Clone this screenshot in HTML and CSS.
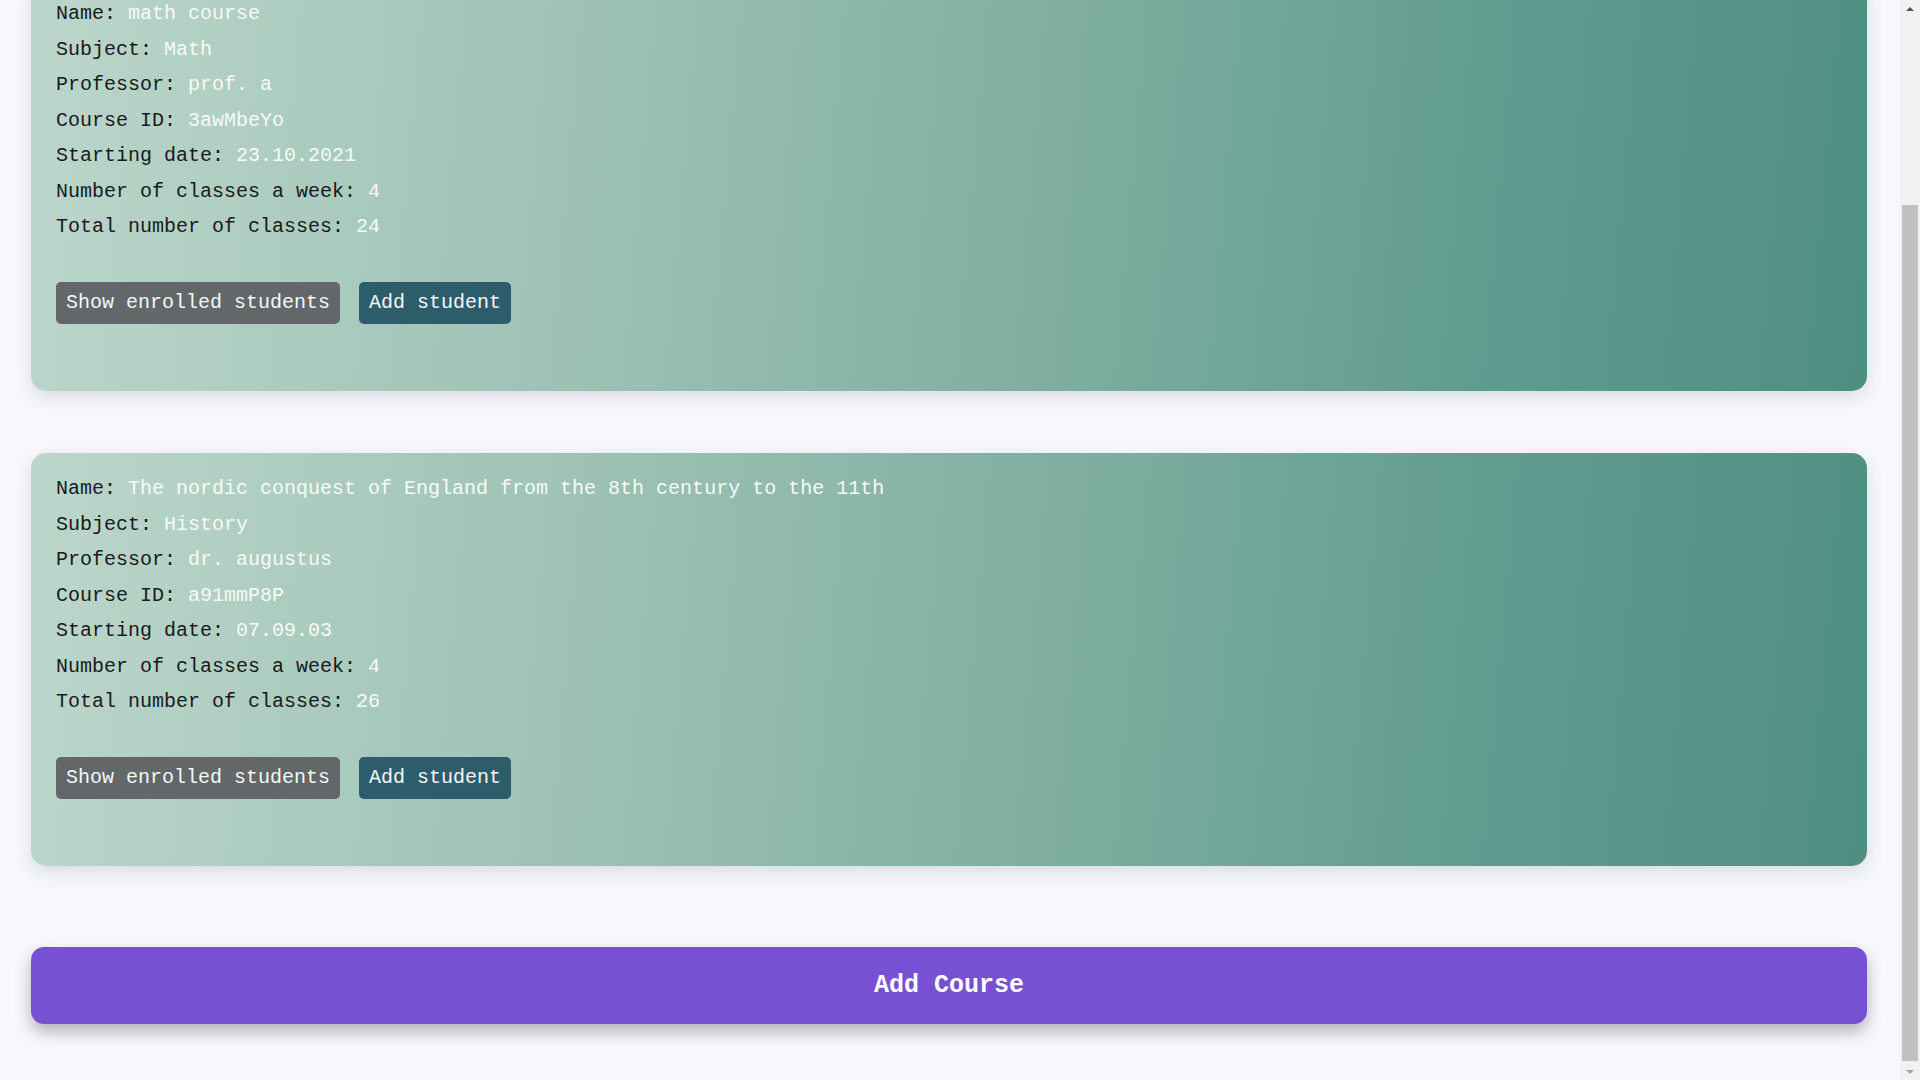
FILE: index.html
```html
<!DOCTYPE html>
<html lang="en">
<head>
<meta charset="utf-8">
<title>Courses</title>
<link rel="stylesheet" href="styles.css">
</head>
<body>
<main class="page">
  <div class="top-space"></div>

  <section class="course-card">
    <p class="row"><span class="label">Name:</span> <span class="value">math course</span></p>
    <p class="row"><span class="label">Subject:</span> <span class="value">Math</span></p>
    <p class="row"><span class="label">Professor:</span> <span class="value">prof. a</span></p>
    <p class="row"><span class="label">Course ID:</span> <span class="value">3awMbeYo</span></p>
    <p class="row"><span class="label">Starting date:</span> <span class="value">23.10.2021</span></p>
    <p class="row"><span class="label">Number of classes a week:</span> <span class="value">4</span></p>
    <p class="row"><span class="label">Total number of classes:</span> <span class="value">24</span></p>
    <div class="actions">
      <button class="btn btn-grey">Show enrolled students</button>
      <button class="btn btn-teal">Add student</button>
    </div>
  </section>

  <section class="course-card">
    <p class="row"><span class="label">Name:</span> <span class="value">The nordic conquest of England from the 8th century to the 11th</span></p>
    <p class="row"><span class="label">Subject:</span> <span class="value">History</span></p>
    <p class="row"><span class="label">Professor:</span> <span class="value">dr. augustus</span></p>
    <p class="row"><span class="label">Course ID:</span> <span class="value">a91mmP8P</span></p>
    <p class="row"><span class="label">Starting date:</span> <span class="value">07.09.03</span></p>
    <p class="row"><span class="label">Number of classes a week:</span> <span class="value">4</span></p>
    <p class="row"><span class="label">Total number of classes:</span> <span class="value">26</span></p>
    <div class="actions">
      <button class="btn btn-grey">Show enrolled students</button>
      <button class="btn btn-teal">Add student</button>
    </div>
  </section>

  <button class="add-course">Add Course</button>
</main>

<div class="fake-scrollbar" aria-hidden="true">
  <div class="sb-arrow sb-up"></div>
  <div class="sb-track"><div class="sb-thumb"></div></div>
  <div class="sb-arrow sb-down"></div>
</div>

<script src="script.js"></script>
</body>
</html>
```

FILE: styles.css
```css
html {
  overflow-y: scroll;
}

body {
  margin: 0;
  background: #f7f8fc;
  font-family: "Liberation Mono", "Courier New", monospace;
  color: #1c1c1c;
}

.page {
  display: flex;
  flex-direction: column;
  padding: 0 53px 56px 31px;
}

.top-space {
  height: 217px;
}

.course-card {
  border-radius: 15px;
  background: linear-gradient(95deg, #bcd6cb 0%, #9dc2b5 30%, #7aab9d 60%, #5f9b8e 80%, #4f8f82 100%);
  box-shadow: 0 6px 18px rgba(40, 50, 70, 0.14);
  padding: 18px 25px 67px;
  margin-bottom: 62px;
}

.course-card:last-of-type {
  margin-bottom: 0;
}

.row {
  margin: 0;
  font-size: 20px;
  line-height: 35.5px;
  white-space: pre;
}

.label {
  color: #1a1a1a;
}

.value {
  color: #f6faf8;
}

.actions {
  display: flex;
  gap: 19px;
  margin-top: 37px;
}

.btn {
  font-family: "Liberation Mono", "Courier New", monospace;
  font-size: 20px;
  line-height: 22.7px;
  padding: 10px 10px;
  border: none;
  border-radius: 5px;
  color: #f5f7f7;
  cursor: pointer;
}

.btn-grey {
  background: #636769;
}

.btn-teal {
  background: #2d5d6b;
}

.add-course {
  margin-top: 81px;
  height: 77px;
  border: none;
  border-radius: 13px;
  background: #7850d4;
  color: #ffffff;
  font-family: "Liberation Mono", "Courier New", monospace;
  font-size: 25px;
  font-weight: bold;
  box-shadow: 0 8px 16px rgba(0, 0, 0, 0.28);
  cursor: pointer;
}

/* browser scrollbar as seen in the reference */
.fake-scrollbar {
  position: fixed;
  top: 0;
  right: 0;
  width: 20px;
  height: 100vh;
  background: #f1f1f1;
  display: flex;
  flex-direction: column;
}

.sb-arrow {
  height: 17px;
  display: flex;
  align-items: center;
  justify-content: center;
}

.sb-arrow::before {
  content: "";
  width: 0;
  height: 0;
  border-left: 4px solid transparent;
  border-right: 4px solid transparent;
}

.sb-up::before {
  border-bottom: 4px solid #505050;
}

.sb-down::before {
  border-top: 4px solid #a3a3a3;
}

.sb-track {
  flex: 1;
  display: flex;
  flex-direction: column;
  justify-content: flex-end;
  padding: 0 2px 2px;
}

.sb-thumb {
  height: 856px;
  background: #c1c1c1;
}
```

FILE: script.js
```js
window.scrollTo(0, document.documentElement.scrollHeight);
```
